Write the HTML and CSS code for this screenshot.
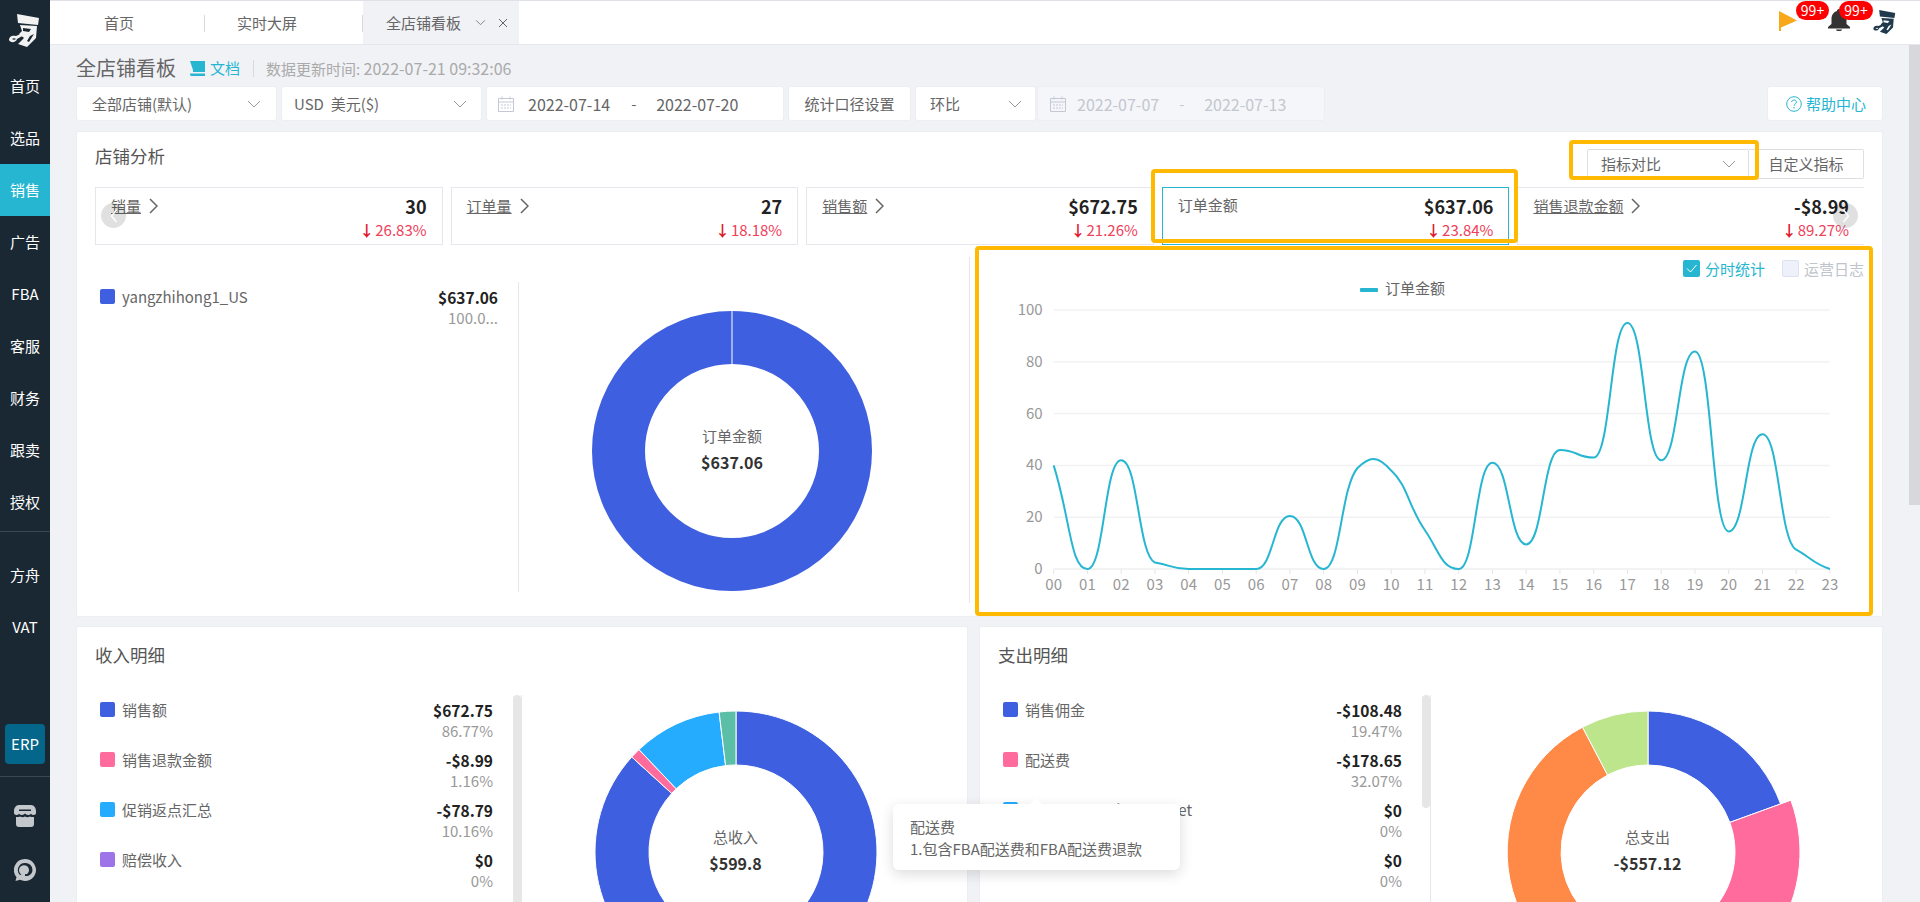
FILE: index.html
```html
<!DOCTYPE html>
<html lang="zh-CN">
<head>
<meta charset="utf-8">
<title>全店铺看板</title>
<link rel="stylesheet" href="styles.css">
</head>
<body>
<aside class="sidebar">
  <svg class="logo" viewBox="0 0 32 33"><path fill="#f2f2f2" d="M8 0l22 4-1 7-20-2z"/><path fill="#f2f2f2" d="M11 11l17 1-1 12-9 9-9-3 6-6-5-4 3-3z"/><path fill="#f2f2f2" d="M0 26c0-4 4-5 7-4l9-4 1 2-9 5c-1 4-7 4-8 1zm3-1c1 1 3 1 4 0-1-1-3-1-4 0z"/><path fill="#1a2833" d="M14 14l8 1-2 3-6-1zM21 22l4-2-5 8-2-1z"/></svg>
  <nav class="nav">
    <a class="nav-item">首页</a>
    <a class="nav-item">选品</a>
    <a class="nav-item active">销售</a>
    <a class="nav-item">广告</a>
    <a class="nav-item">FBA</a>
    <a class="nav-item">客服</a>
    <a class="nav-item">财务</a>
    <a class="nav-item">跟卖</a>
    <a class="nav-item">授权</a>
  </nav>
  <div class="nav-rule"></div>
  <nav class="nav">
    <a class="nav-item">方舟</a>
    <a class="nav-item">VAT</a>
  </nav>
  <div class="erp">ERP</div>
  <div class="nav-rule second"></div>
  <svg class="side-icon" viewBox="0 0 22 22"><path fill="#c4c7cb" d="M5 0h12c3 0 5 3 5 6v2c0 1-1 2-2.500 2-1.200 0-2-.7-2.500-1.300C16.500 9.300 15.500 10 14 10c-1.200 0-2.300-.6-3-1.400C10.300 9.400 9.200 10 8 10c-1.500 0-2.500-.7-3-1.300C4.500 9.300 3.700 10 2.500 10 1 10 0 9 0 8V6c0-3 2-6 5-6z"/><path fill="#c4c7cb" d="M2 12c1.500.3 3 0 4-.6 1.500 1 3.500 1 5 .1 1.500.9 3.500.9 5-.1 1 .6 2.500.9 4 .6v7c0 2-1 3-3 3H5c-2 0-3-1-3-3z"/><rect x="5" y="4.500" width="12" height="1.500" fill="#1a2833"/></svg>
  <svg class="side-icon chat" viewBox="0 0 22 22"><path fill="#c4c7cb" fill-rule="evenodd" d="M11 0a11 11 0 1 1-5 20.800L1.500 22l1-4A11 11 0 0 1 11 0zm0 4a7 7 0 0 0-5 12l1.500-.5a5 5 0 1 1 7.500-4.500c0 1.700-.8 3.200-2 4.200l-2-.2v2h3c3-1.300 4.500-3.500 4.500-6A7 7 0 0 0 11 4z"/></svg>
</aside>

<div class="main">
  <header class="topbar">
    <div class="tabs">
      <div class="tab tab-home">首页</div>
      <div class="tab tab-screen">实时大屏</div>
      <div class="tab tab-active">全店铺看板
        <svg class="tab-chev" viewBox="0 0 12 8"><path d="M1 1.500l5 5 5-5" fill="none" stroke="#777" stroke-width="1"/></svg>
        <svg class="tab-x" viewBox="0 0 10 10"><path d="M1 1l8 8M9 1l-8 8" fill="none" stroke="#666" stroke-width="1"/></svg>
      </div>
    </div>
    <div class="top-icons">
      <span class="top-icon flag-wrap">
        <svg class="flag" viewBox="0 0 18 20"><path fill="#f7a81b" d="M0 0l18 9.500L2 16.500V20H0z"/></svg>
        <b class="badge">99+</b>
      </span>
      <span class="top-icon bell-wrap">
        <svg class="bell" viewBox="0 0 24 22"><path fill="#333" d="M12 0c1.500 0 2 1 2 2 3.500 1 5.500 4 5.500 8v5l3.500 3v1.500H1V18l3.500-3v-5c0-4 2-7 5.500-8 0-1 .5-2 2-2z"/><path fill="#333" d="M9 20.500h6c0 1-1.300 1.500-3 1.500s-3-.5-3-1.500z"/></svg>
        <b class="badge">99+</b>
      </span>
      <svg class="avatar" viewBox="0 0 32 33"><path fill="#1f3a4d" d="M8 0l22 4-1 7-20-2z"/><path fill="#1f3a4d" d="M11 11l17 1-1 12-9 9-9-3 6-6-5-4 3-3z"/><path fill="#1f3a4d" d="M0 26c0-4 4-5 7-4l9-4 1 2-9 5c-1 4-7 4-8 1zm3-1c1 1 3 1 4 0-1-1-3-1-4 0z"/><path fill="#fff" d="M14 14l8 1-2 3-6-1zM21 22l4-2-5 8-2-1z"/></svg>
    </div>
  </header>

  <div class="workspace">
    <main class="content">
      <div class="page-head">
        <h1 class="page-title">全店铺看板</h1>
        <svg class="doc-icon" viewBox="0 0 15 15"><path fill="#27b6d1" d="M0 0h3v11h12V0h-10v9h-2zM0 12.500h15V15H1.500C.5 15 0 14 0 13z"/><path fill="#27b6d1" d="M3 0h12v11H3z"/></svg>
        <span class="doc-link">文档</span>
        <span class="head-rule"></span>
        <span class="update">数据更新时间: <span class="num">2022-07-21 09:32:06</span></span>
      </div>

      <div class="toolbar">
        <div class="ctl w-shop"><span>全部店铺(默认)</span><svg class="chev" viewBox="0 0 14 8"><path d="M1 1l6 6 6-6"/></svg></div>
        <div class="ctl w-cur"><span>USD&nbsp; 美元($)</span><svg class="chev" viewBox="0 0 14 8"><path d="M1 1l6 6 6-6"/></svg></div>
        <div class="ctl w-date">
          <svg class="cal" viewBox="0 0 16 16"><path fill="none" stroke="#c3c9d4" d="M.5 2.500h15v13H.5zM.5 6h15M4 .5v3M12 .5v3"/><path stroke="#c3c9d4" stroke-dasharray="2 1" d="M3 9h10M3 12h10"/></svg>
          <span class="num date-a">2022-07-14</span><span class="dash">-</span><span class="num">2022-07-20</span>
        </div>
        <div class="ctl w-stat">统计口径设置</div>
        <div class="ctl w-ring"><span>环比</span><svg class="chev" viewBox="0 0 14 8"><path d="M1 1l6 6 6-6"/></svg></div>
        <div class="ctl w-date2">
          <svg class="cal" viewBox="0 0 16 16"><path fill="none" stroke="#c3c9d4" d="M.5 2.500h15v13H.5zM.5 6h15M4 .5v3M12 .5v3"/><path stroke="#c3c9d4" stroke-dasharray="2 1" d="M3 9h10M3 12h10"/></svg>
          <span class="num date-a">2022-07-07</span><span class="dash">-</span><span class="num">2022-07-13</span>
        </div>
        <div class="ctl w-help">
          <svg class="help-icon" viewBox="0 0 16 16"><circle cx="8" cy="8" r="7.300" fill="none" stroke="#27b6d1"/><path d="M5.700 6.200C5.800 4.800 6.800 4 8 4c1.400 0 2.400.9 2.400 2.100 0 1.800-2.400 1.900-2.400 3.700" fill="none" stroke="#27b6d1"/><circle cx="8" cy="11.800" r=".8" fill="#27b6d1"/></svg>
          帮助中心
        </div>
      </div>

      <section class="card card-shop">
        <div class="card-head">
          <h2 class="card-title">店铺分析</h2>
          <div class="head-actions">
            <div class="compare"><span>指标对比</span><svg class="chev" viewBox="0 0 14 8"><path d="M1 1l6 6 6-6"/></svg></div>
            <div class="custom">自定义指标</div>
          </div>
        </div>
        <div class="metrics">
          <div class="metric"><div class="m-top"><span class="m-name">销量</span><svg class="m-arrow" viewBox="0 0 9 16"><path d="M1 1l7 7-7 7"/></svg><b class="m-val">30</b></div><div class="m-pct"><i class="down">↓</i>26.83%</div></div>
          <div class="metric"><div class="m-top"><span class="m-name">订单量</span><svg class="m-arrow" viewBox="0 0 9 16"><path d="M1 1l7 7-7 7"/></svg><b class="m-val">27</b></div><div class="m-pct"><i class="down">↓</i>18.18%</div></div>
          <div class="metric"><div class="m-top"><span class="m-name">销售额</span><svg class="m-arrow" viewBox="0 0 9 16"><path d="M1 1l7 7-7 7"/></svg><b class="m-val">$672.75</b></div><div class="m-pct"><i class="down">↓</i>21.26%</div></div>
          <div class="metric selected"><div class="m-top"><span class="m-plain">订单金额</span><b class="m-val">$637.06</b></div><div class="m-pct"><i class="down">↓</i>23.84%</div></div>
          <div class="metric last"><div class="m-top"><span class="m-name">销售退款金额</span><svg class="m-arrow" viewBox="0 0 9 16"><path d="M1 1l7 7-7 7"/></svg><b class="m-val">-$8.99</b></div><div class="m-pct"><i class="down">↓</i>89.27%</div></div>
        </div>
        <button class="pager pager-l"><svg viewBox="0 0 8 14"><path d="M6.500 1L1.500 7l5 6"/></svg></button>
        <button class="pager pager-r"><svg viewBox="0 0 8 14"><path d="M1.500 1l5 6-5 6"/></svg></button>

        <div class="shop-body">
          <div class="shop-legend">
            <div class="row"><span class="sw c-blue"></span><span class="r-name">yangzhihong1_US</span><span class="r-nums"><b>$637.06</b><em class="clip">100.0...</em></span></div>
          </div>
          <div class="shop-donut">
            <div class="donut">
              <svg class="donut-svg" viewBox="-141 -141 282 282"><circle r="113.500" fill="none" stroke="#3e5fdf" stroke-width="53"/><path d="M0 -141V-87" stroke="#fff" stroke-width="1"/></svg>
              <div class="donut-label"><span>订单金额</span><b>$637.06</b></div>
            </div>
          </div>
          <div class="shop-chart">
            <div class="checks">
              <span class="check on"><svg viewBox="0 0 17 17"><path d="M4 8.500l3.500 3.500 6-7" fill="none" stroke="#fff"/></svg></span><span class="check-text on-text">分时统计</span>
              <span class="check"></span><span class="check-text">运营日志</span>
            </div>
            <svg class="line-chart" viewBox="0 0 895 320">
              <rect class="leg-mark" x="390" y="7" width="18" height="4" rx="1"/>
              <text class="leg-text" x="415" y="13">订单金额</text>
              <g transform="translate(83.700 29)">
                <path class="grid" d="M0 0H776M0 51.800H776M0 103.600H776M0 155.400H776M0 207.200H776"/>
                <path class="axis" d="M0 259H776"/>
                <path class="axis" d="M0 259v5M33.750 259v5M67.500 259v5M101.250 259v5M135 259v5M168.750 259v5M202.500 259v5M236.250 259v5M270 259v5M303.750 259v5M337.500 259v5M371.250 259v5M405 259v5M438.750 259v5M472.500 259v5M506.250 259v5M540 259v5M573.750 259v5M607.500 259v5M641.250 259v5M675 259v5M708.750 259v5M742.500 259v5M776.250 259v5"/>
                <g class="y-labels">
                  <text x="-11" y="5">100</text><text x="-11" y="57">80</text><text x="-11" y="109">60</text><text x="-11" y="160">40</text><text x="-11" y="212">20</text><text x="-11" y="264">0</text>
                </g>
                <g class="x-labels">
                  <text x="0" y="280">00</text><text x="33.750" y="280">01</text><text x="67.500" y="280">02</text><text x="101.250" y="280">03</text><text x="135" y="280">04</text><text x="168.750" y="280">05</text><text x="202.500" y="280">06</text><text x="236.250" y="280">07</text><text x="270" y="280">08</text><text x="303.750" y="280">09</text><text x="337.500" y="280">10</text><text x="371.250" y="280">11</text><text x="405" y="280">12</text><text x="438.750" y="280">13</text><text x="472.500" y="280">14</text><text x="506.250" y="280">15</text><text x="540" y="280">16</text><text x="573.750" y="280">17</text><text x="607.500" y="280">18</text><text x="641.250" y="280">19</text><text x="675" y="280">20</text><text x="708.750" y="280">21</text><text x="742.500" y="280">22</text><text x="776.250" y="280">23</text>
                </g>
                <path class="curve" d="M0 155.400C17 210 16.750 259 33.750 259C50.750 259 50.500 150.200 67.500 150.200C84.500 150.200 84.250 245 101.250 252.500C118.250 255 118 259 135 259L202.500 259C219.500 259 219.250 205.900 236.250 205.900C253.250 205.900 253 259 270 259C287 259 286.750 178 303.750 158C316 146 324 145 337.500 160.600C354.500 176 354.250 196 371.250 220.200C385 240 388 259 405 259C422 259 421.750 152.800 438.750 152.800C455.750 152.800 455.500 234.400 472.500 234.400C489.500 234.400 489.250 139.900 506.250 139.900C523.250 139.900 523 147.600 540 147.600C557 147.600 556.750 13 573.750 13C590.750 13 590.500 150.200 607.500 150.200C624.500 150.200 624.250 41.400 641.250 41.400C658.250 41.400 658 221.400 675 221.400C692 221.400 691.750 124.300 708.750 124.300C725.750 124.300 725.500 231 742.500 239.600C755 246 760 254 776.250 259"/>
              </g>
            </svg>
          </div>
        </div>
      </section>

      <div class="detail-row">
        <section class="card detail detail-in">
          <h2 class="card-title detail-title">收入明细</h2>
          <div class="detail-body">
            <div class="legend">
              <div class="rows">
                <div class="row"><span class="sw c-blue"></span><span class="r-name">销售额</span><span class="r-nums"><b>$672.75</b><em>86.77%</em></span></div>
                <div class="row"><span class="sw c-pink"></span><span class="r-name">销售退款金额</span><span class="r-nums"><b>-$8.99</b><em>1.16%</em></span></div>
                <div class="row"><span class="sw c-cyan"></span><span class="r-name">促销返点汇总</span><span class="r-nums"><b>-$78.79</b><em>10.16%</em></span></div>
                <div class="row"><span class="sw c-purple"></span><span class="r-name">赔偿收入</span><span class="r-nums"><b>$0</b><em>0%</em></span></div>
                <div class="row"><span class="sw c-teal"></span></div>
              </div>
              <div class="thumb thumb-long"></div>
            </div>
            <div class="donut-col">
              <div class="donut">
                <svg class="donut-svg" viewBox="-141 -141 282 282">
                  <g stroke="#fff" stroke-width="1">
                    <path fill="#3e5fdf" d="M0 -141A141 141 0 1 1 -104.200 -95L-64.300 -58.600A87 87 0 1 0 0 -87Z"/>
                    <path fill="#ff6b9d" d="M-104.200 -95A141 141 0 0 1 -97 -102.400L-59.800 -63.200A87 87 0 0 0 -64.300 -58.600Z"/>
                    <path fill="#26acff" d="M-97 -102.400A141 141 0 0 1 -16.900 -140L-10.400 -86.400A87 87 0 0 0 -59.800 -63.200Z"/>
                    <path fill="#5bbfa8" d="M-16.900 -140A141 141 0 0 1 0 -141L0 -87A87 87 0 0 0 -10.400 -86.400Z"/>
                  </g>
                </svg>
                <div class="donut-label"><span>总收入</span><b>$599.8</b></div>
              </div>
            </div>
          </div>
        </section>
        <section class="card detail detail-out">
          <h2 class="card-title detail-title">支出明细</h2>
          <div class="detail-body">
            <div class="legend">
              <div class="rows">
                <div class="row"><span class="sw c-blue"></span><span class="r-name">销售佣金</span><span class="r-nums"><b>-$108.48</b><em>19.47%</em></span></div>
                <div class="row"><span class="sw c-pink"></span><span class="r-name">配送费</span><span class="r-nums"><b>-$178.65</b><em>32.07%</em></span></div>
                <div class="row"><span class="sw c-cyan"></span><span class="r-name r-long">Amazon Service Fee Net</span><span class="r-nums"><b>$0</b><em>0%</em></span></div>
                <div class="row"><span class="sw c-purple"></span><span class="r-name">其他费用</span><span class="r-nums"><b>$0</b><em>0%</em></span></div>
                <div class="row"><span class="sw c-teal"></span></div>
              </div>
              <div class="thumb thumb-short"></div>
            </div>
            <div class="donut-col">
              <div class="donut">
                <svg class="donut-svg wide" viewBox="-152 -152 304 304">
                  <g stroke="#fff" stroke-width="1">
                    <path fill="#3e5fdf" d="M0 -141A141 141 0 0 1 132.600 -48L81.800 -29.600A87 87 0 0 0 0 -87Z"/>
                    <path fill="#ff6b9d" d="M142.900 -51.800A152 152 0 0 1 -14.700 151.300L-8.400 86.600A87 87 0 0 0 81.800 -29.600Z"/>
                    <path fill="#ff8a47" d="M-13.600 140.300A141 141 0 0 1 -65.500 -124.800L-40.400 -77A87 87 0 0 0 -8.400 86.600Z"/>
                    <path fill="#bde58c" d="M-65.500 -124.800A141 141 0 0 1 0 -141L0 -87A87 87 0 0 0 -40.400 -77Z"/>
                  </g>
                </svg>
                <div class="donut-label"><span>总支出</span><b>-$557.12</b></div>
              </div>
            </div>
          </div>
        </section>
      </div>

      <div class="mark mark-compare"></div>
      <div class="mark mark-metric"></div>
      <div class="mark mark-chart"></div>
      <div class="tip"><div>配送费</div><div>1.包含FBA配送费和FBA配送费退款</div></div>
    </main>
    <div class="scrollbar"><div class="scroll-thumb"></div></div>
  </div>
</div>
</body>
</html>
```
FILE: styles.css
```css
* { box-sizing: border-box; }
html, body { height: 100%; }
body {
  margin: 0;
  display: flex;
  height: 902px;
  overflow: hidden;
  background: #f1f2f6;
  color: #666;
  font: 15px/20px "Noto Sans CJK SC", "Liberation Sans", sans-serif;
}
h1, h2 { margin: 0; font-weight: 400; }
i, em { font-style: normal; }

/* sidebar */
.sidebar { flex: none; width: 50px; background: #1a2833; display: flex; flex-direction: column; align-items: stretch; }
.logo { width: 32px; height: 33px; margin: 14px 0 0 9px; flex: none; }
.nav { display: flex; flex-direction: column; }
.sidebar > .nav:first-of-type { margin-top: 13px; }
.nav-item { height: 52px; display: flex; align-items: center; justify-content: center; color: #fff; font-size: 15px; }
.nav-item.active { background: #27b6d1; }
.nav-rule { height: 1px; background: #3b4852; margin-top: 3px; flex: none; }
.nav-rule + .nav { margin-top: 17px; }
.erp { margin: 71px 5px 0; height: 40px; border-radius: 4px; background: #04668a; color: #fff; display: flex; align-items: center; justify-content: center; font-size: 15px; flex: none; }
.nav-rule.second { margin-top: 12px; }
.side-icon { width: 22px; height: 22px; margin: 28px 0 0 14px; flex: none; }
.side-icon.chat { margin-top: 32px; }

/* main */
.main { flex: 1; min-width: 0; display: flex; flex-direction: column; }
.topbar { flex: none; height: 45px; background: #fff; border-top: 1px solid #dfe1e6; border-bottom: 1px solid #e6e7ec; display: flex; justify-content: space-between; }
.tabs { display: flex; }
.tab { height: 43px; display: flex; align-items: center; position: relative; color: #666; }
.tab-home { width: 155px; padding-left: 54px; }
.tab-screen { width: 158px; padding-left: 32px; }
.tab-home::after, .tab-screen::after { content: ""; position: absolute; right: 0; top: 14px; height: 17px; width: 1px; background: #d9d9d9; }
.tab-active { width: 156px; padding-left: 23px; background: #f1f2f6; }
.tab-chev { width: 11px; height: 7px; margin-left: 14px; }
.tab-x { width: 10px; height: 10px; margin-left: 12px; }
.top-icons { display: flex; align-items: flex-start; padding-right: 23px; }
.top-icon { position: relative; display: block; }
.flag-wrap { width: 18px; height: 20px; margin-top: 10px; }
.flag { width: 18px; height: 20px; display: block; }
.bell-wrap { width: 24px; height: 22px; margin: 8px 0 0 30px; }
.bell { width: 24px; height: 22px; display: block; }
.badge { position: absolute; top: -10px; left: 17px; width: 33px; height: 19px; border-radius: 10px; background: #f00; color: #fff; font: 400 14px/19px "Noto Sans CJK SC", sans-serif; text-align: center; }
.bell-wrap .badge { top: -8px; left: 12px; width: 34px; }
.avatar { width: 24px; height: 24px; margin: 9px 0 0 22px; }

/* content */
.workspace { flex: 1; min-height: 0; display: flex; }
.content { flex: 1; min-width: 0; padding: 0 26px; position: relative; overflow: hidden; }
.scrollbar { flex: none; width: 11px; }
.scroll-thumb { height: 460px; background: #d8d8dc; }
.num { font-size: 16px; }

.page-head { height: 30px; margin: 8px 0 3px; display: flex; align-items: center; }
.page-title { font-size: 20px; color: #666; width: 114px; }
.doc-icon { width: 15px; height: 15px; }
.doc-link { color: #27b6d1; margin-left: 5px; }
.head-rule { width: 1px; height: 17px; background: #d9d9d9; margin: 0 12px 0 13px; }
.update { color: #aaa; }

.toolbar { height: 35px; margin-bottom: 10px; display: flex; gap: 4px; }
.ctl { height: 35px; background: #fff; border: 1px solid #eceef2; border-radius: 3px; display: flex; align-items: center; color: #666; flex: none; }
.chev { width: 14px; height: 8px; margin-left: auto; fill: none; stroke: #999; stroke-width: 1; }
.w-shop { width: 201px; padding: 0 15px; }
.w-cur { width: 201px; padding: 0 14px 0 12px; }
.w-date { width: 298px; padding-left: 11px; }
.w-date .date-a { margin-left: 14px; }
.dash { width: 17px; margin: 0 8px 0 21px; }
.cal { width: 16px; height: 16px; flex: none; }
.w-stat { width: 123px; justify-content: center; }
.w-ring { width: 121px; padding: 0 13px 0 14px; }
.w-date2 { width: 288px; margin-left: -3px; background: #f5f6f9; padding-left: 12px; color: #c3c7cf; }
.w-date2 .date-a { margin-left: 11px; }
.w-date2 .dash { margin: 0 8px 0 20px; }
.w-help { width: 116px; margin-left: auto; color: #27b6d1; padding-left: 18px; gap: 4px; }
.help-icon { width: 16px; height: 16px; }

/* cards */
.card { background: #fff; border: 1px solid #eceef2; border-radius: 2px; position: relative; }
.card-title { font-size: 17.500px; color: #555; }
.card-shop { height: 486px; padding: 0 18px; }
.card-head { height: 55px; display: flex; justify-content: space-between; }
.card-head .card-title { line-height: 48px; }
.head-actions { display: flex; margin-top: 17px; }
.compare { width: 162px; height: 30px; border: 1px solid #dcdee2; border-radius: 2px; padding: 0 12px 0 13px; display: flex; align-items: center; }
.custom { width: 115px; height: 30px; border: 1px solid #dcdee2; border-left: 0; border-radius: 0 2px 2px 0; display: flex; align-items: center; justify-content: center; }

.metrics { display: flex; gap: 8px; height: 58px; }
.metric { flex: 1 1 0; min-width: 0; border: 1px solid #e6e7ec; padding: 7px 15px 0 15px; }
.metric.selected { border-color: #27b6d1; }
.metric.last { border-right: 0; }
.m-top { display: flex; align-items: center; height: 22px; }
.m-name { text-decoration: underline; color: #666; }
.m-plain { color: #666; margin-top: -2px; }
.m-arrow { width: 9px; height: 16px; margin-left: 8px; fill: none; stroke: #666; stroke-width: 1.500; }
.m-val { margin-left: auto; font-size: 18px; font-weight: 700; color: #222; }
.m-pct { text-align: right; color: #f0405a; margin-top: 3px; line-height: 20px; }
.down { color: #e0182d; font-weight: 700; margin-right: 1px; }
.pager { position: absolute; top: 71px; width: 25px; height: 25px; padding: 0; border: 0; border-radius: 50%; background: rgba(0, 0, 0, .12); display: flex; align-items: center; justify-content: center; }
.pager svg { width: 8px; height: 14px; fill: none; stroke: #fff; stroke-width: 1.500; }
.pager-l { left: 24px; }
.pager-r { right: 24px; }

.shop-body { display: flex; height: 371px; }
.shop-legend { width: 424px; margin-top: 37px; height: 310px; border-right: 1px solid #e6e7ec; padding-right: 20px; }
.shop-donut { width: 451px; padding: 53px 24px 0 0; display: flex; justify-content: center; align-items: flex-start; border-right: 1px solid #e6e7ec; height: 346px; margin-top: 12px; }
.shop-chart { flex: 1; min-width: 0; padding-top: 15px; }
.checks { display: flex; align-items: center; justify-content: flex-end; height: 17px; margin-bottom: 4px; }
.check { width: 17px; height: 17px; border: 1px solid #dde2f0; background: #eef1fa; border-radius: 2px; margin-left: 17px; }
.check.on { background: #27b6d1; border: 0; margin-left: 0; }
.check svg { display: block; }
.check-text { margin-left: 5px; color: #c0c4cc; }
.check-text.on-text { color: #27b6d1; }
.line-chart { display: block; width: 895px; height: 320px; }
.grid { stroke: #f2f2f4; stroke-width: 1.500; fill: none; }
.axis { stroke: #e6e6e8; stroke-width: 1; fill: none; }
.curve { fill: none; stroke: #27b6d1; stroke-width: 2; }
.leg-mark { fill: #27b6d1; }
.leg-text { fill: #666; font-size: 15px; }
.y-labels text { fill: #999; font-size: 15px; text-anchor: end; }
.x-labels text { fill: #999; font-size: 15px; text-anchor: middle; }

.sw { flex: none; width: 15px; height: 15px; border-radius: 2px; margin: 7px 7px 0 5px; }
.c-blue { background: #3e5fdf; }
.c-pink { background: #ff6b9d; }
.c-cyan { background: #26acff; }
.c-purple { background: #9d75e8; }
.c-teal { background: #5bbfa8; }
.row { display: flex; height: 50px; }
.r-name { padding-top: 5px; color: #666; white-space: nowrap; }
.r-nums { margin-left: auto; padding-top: 5px; display: flex; flex-direction: column; align-items: flex-end; }
.r-nums b { font-size: 15.500px; color: #222; line-height: 20px; }
.r-nums em { color: #999; line-height: 22px; }

.donut { position: relative; width: 282px; height: 282px; flex: none; }
.donut-svg { display: block; width: 282px; height: 282px; overflow: visible; }
.donut-svg.wide { width: 304px; height: 304px; margin: -11px; }
.donut-label { position: absolute; inset: 0; display: flex; flex-direction: column; align-items: center; justify-content: center; padding-bottom: 5px; }
.donut-label span { line-height: 26px; color: #666; }
.donut-label b { font-size: 16px; color: #333; line-height: 26px; }

.detail-row { display: flex; gap: 11px; margin-top: 9px; height: 400px; }
.detail-in { width: 892px; flex: none; }
.detail-out { flex: 1; min-width: 0; }
.detail { padding: 0 18px; }
.detail-title { height: 68px; line-height: 56px; }
.detail-body { display: flex; }
.legend { width: 50%; flex: none; display: flex; height: 320px; border-right: 1px solid #e6e7ec; }
.rows { flex: 1; min-width: 0; padding-right: 20px; }
.thumb { width: 8px; flex: none; background: #e6e6e6; border-radius: 4px; }
.thumb-long { height: 320px; }
.thumb-short { height: 113px; }
.donut-col { flex: 1; display: flex; justify-content: center; padding-top: 16px; }

/* annotation boxes & tooltip */
.mark { position: absolute; border: 4px solid #ffb900; border-radius: 4px; pointer-events: none; }
.mark-compare { left: 1519px; top: 95px; width: 190px; height: 40px; }
.mark-metric { left: 1101px; top: 124px; width: 367px; height: 74px; }
.mark-chart { left: 925px; top: 201px; width: 898px; height: 370px; }
.tip { position: absolute; left: 843px; top: 759px; width: 287px; height: 66px; padding: 12px 17px; background: #fff; border-radius: 6px; box-shadow: 0 4px 14px rgba(0, 0, 0, .14); color: #666; line-height: 22px; white-space: nowrap; }
.tip::before { content: ""; position: absolute; left: 138px; top: -4px; width: 10px; height: 10px; background: #fff; transform: rotate(45deg); }
```
